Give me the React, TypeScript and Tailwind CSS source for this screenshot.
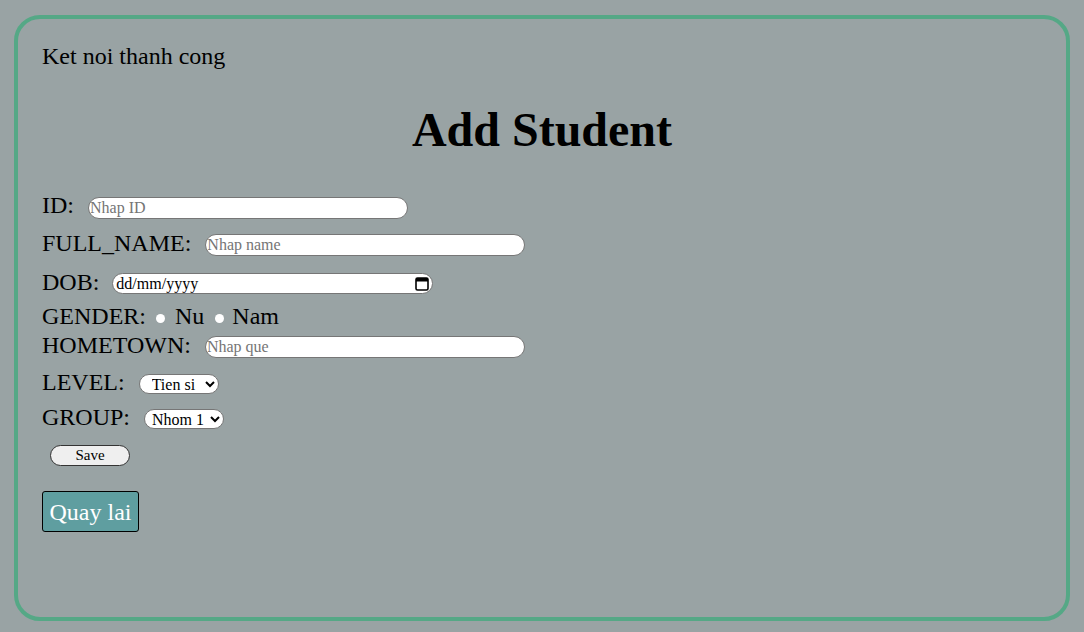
import React from "react";

const serif = { fontFamily: '"Liberation Serif", "Times New Roman", serif' };

const TextBox = ({ placeholder, left }: { placeholder: string; left: string }) => (
  <input
    type="text"
    placeholder={placeholder}
    className={`${left} h-[22px] w-[320px] rounded-full border border-[#767676] bg-white px-[1px] text-[16px] text-black outline-none placeholder:text-[#757575]`}
  />
);

const App = () => {
  return (
    <div className="h-[632px] w-full bg-[#99a3a4] pl-[14px] pt-[15px] text-black" style={serif}>
      <div className="h-[606px] w-[1056px] rounded-[26px] border-4 border-[#55a886] px-[24px] pt-[23px]">
        {/* status */}
        <p className="h-[28px] text-[24px] leading-[28px]">Ket noi thanh cong</p>

        <h1 className="mt-[32px] h-[56px] text-center text-[48px] font-bold leading-[56px]">Add Student</h1>

        <form className="mt-[31px] flex flex-col text-[24px]" onSubmit={(e) => e.preventDefault()}>
          <div className="flex h-[37px] items-center">
            <label className="mb-[5px]">ID:</label>
            <TextBox placeholder="Nhap ID" left="ml-[14px]" />
          </div>
          <div className="flex h-[38px] items-center">
            <label className="mb-[4px]">FULL_NAME:</label>
            <TextBox placeholder="Nhap name" left="ml-[14px]" />
          </div>
          <div className="flex h-[36px] items-center">
            <label className="mb-[1px]">DOB:</label>
            <div className="ml-[13px] mt-[3px] flex h-[21px] w-[321px] items-center justify-between rounded-full border border-[#767676] bg-white pl-[3px] pr-[3px] text-[16px]">
              <span>dd/mm/yyyy</span>
              <svg width="14" height="15" viewBox="0 0 14 15">
                <rect x="1" y="2" width="12" height="12" rx="1.5" fill="none" stroke="#000" strokeWidth="1.6" />
                <rect x="1" y="2" width="12" height="3.5" fill="#000" />
              </svg>
            </div>
          </div>
          <div className="flex h-[32px] items-center">
            <label>GENDER:</label>
            <span className="ml-[10px] mt-[4px] h-[9px] w-[9px] rounded-full bg-white" />
            <span className="ml-[10px]">Nu</span>
            <span className="ml-[11px] mt-[4px] h-[9px] w-[9px] rounded-full bg-white" />
            <span className="ml-[8px]">Nam</span>
          </div>
          <div className="flex h-[29px] items-center">
            <label className="mb-[3px]">HOMETOWN:</label>
            <TextBox placeholder="Nhap que" left="ml-[14px]" />
          </div>
          <div className="flex h-[44px] items-center">
            <label className="mb-[2px]">LEVEL:</label>
            <select className="ml-[14px] mt-[2px] h-[20px] w-[80px] rounded-full border border-[#767676] bg-white pl-[8px] text-[16px] leading-none">
              <option>Tien si</option>
              <option>Thac si</option>
              <option>Cu nhan</option>
            </select>
          </div>
          <div className="flex h-[26px] items-center">
            <label className="mb-[2px]">GROUP:</label>
            <select className="ml-[14px] mt-[2px] h-[20px] w-[80px] rounded-full border border-[#767676] bg-white pl-[3px] text-[16px] leading-none">
              <option>Nhom 1</option>
              <option>Nhom 2</option>
            </select>
          </div>
          <div className="flex h-[48px] items-center">
            <button className="ml-[8px] h-[21px] w-[80px] rounded-full border border-[#333] bg-[#efefef] text-[15px] leading-none">
              Save
            </button>
          </div>
        </form>

        <button className="mt-[12px] h-[41px] w-[97px] rounded-[3px] border border-black bg-[#5f9ea0] text-[24px] text-white">
          Quay lai
        </button>
      </div>
    </div>
  );
};

export default App;
